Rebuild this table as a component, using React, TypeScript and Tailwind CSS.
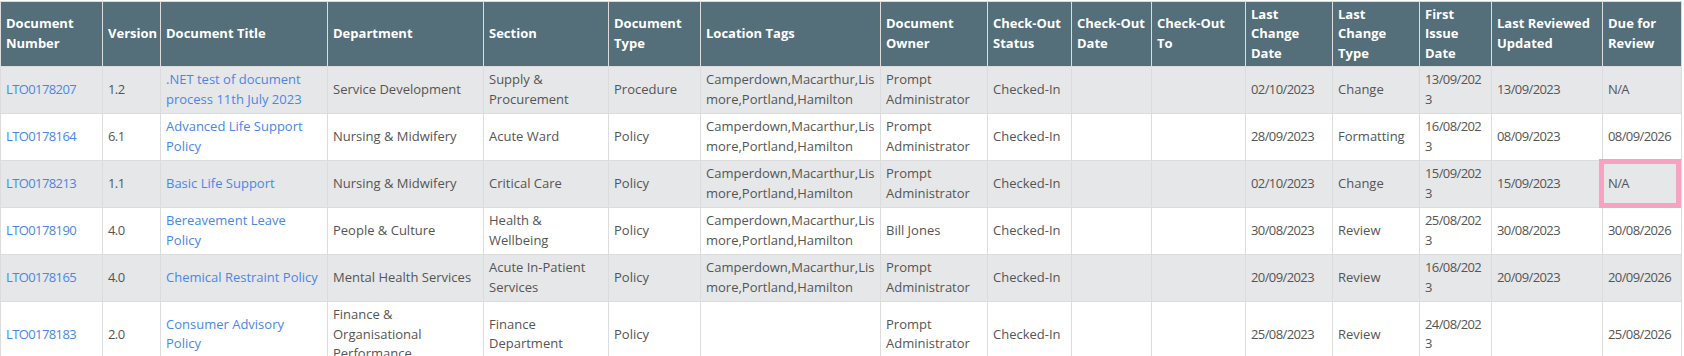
type Column = {
  key: string;
  label: string[];
  width: number;
  kind?: "link" | "date" | "code";
};

type DocRow = Record<string, string> & { highlight?: string };

const COLUMNS: Column[] = [
  { key: "number", label: ["Document", "Number"], width: 102, kind: "code" },
  { key: "version", label: ["Version"], width: 58 },
  { key: "title", label: ["Document Title"], width: 167, kind: "link" },
  { key: "department", label: ["Department"], width: 156 },
  { key: "section", label: ["Section"], width: 125 },
  { key: "type", label: ["Document", "Type"], width: 92 },
  { key: "locations", label: ["Location Tags"], width: 180 },
  { key: "owner", label: ["Document", "Owner"], width: 107 },
  { key: "status", label: ["Check-Out", "Status"], width: 84 },
  { key: "checkoutDate", label: ["Check-Out", "Date"], width: 80 },
  { key: "checkoutTo", label: ["Check-Out", "To"], width: 94 },
  { key: "changeDate", label: ["Last", "Change", "Date"], width: 87, kind: "date" },
  { key: "changeType", label: ["Last", "Change", "Type"], width: 87 },
  { key: "firstIssue", label: ["First", "Issue", "Date"], width: 72, kind: "date" },
  { key: "reviewed", label: ["Last Reviewed", "Updated"], width: 111, kind: "date" },
  { key: "due", label: ["Due for", "Review"], width: 79, kind: "date" }
];

const LOCATIONS = "Camperdown,Macarthur,Lismore,Portland,Hamilton";

const ROWS: DocRow[] = [
  {
    number: "LTO0178207",
    version: "1.2",
    title: ".NET test of document process 11th July 2023",
    department: "Service Development",
    section: "Supply & Procurement",
    type: "Procedure",
    locations: LOCATIONS,
    owner: "Prompt Administrator",
    status: "Checked-In",
    checkoutDate: "",
    checkoutTo: "",
    changeDate: "02/10/2023",
    changeType: "Change",
    firstIssue: "13/09/2023",
    reviewed: "13/09/2023",
    due: "N/A"
  },
  {
    number: "LTO0178164",
    version: "6.1",
    title: "Advanced Life Support Policy",
    department: "Nursing & Midwifery",
    section: "Acute Ward",
    type: "Policy",
    locations: LOCATIONS,
    owner: "Prompt Administrator",
    status: "Checked-In",
    checkoutDate: "",
    checkoutTo: "",
    changeDate: "28/09/2023",
    changeType: "Formatting",
    firstIssue: "16/08/2023",
    reviewed: "08/09/2023",
    due: "08/09/2026"
  },
  {
    number: "LTO0178213",
    version: "1.1",
    title: "Basic Life Support",
    department: "Nursing & Midwifery",
    section: "Critical Care",
    type: "Policy",
    locations: LOCATIONS,
    owner: "Prompt Administrator",
    status: "Checked-In",
    checkoutDate: "",
    checkoutTo: "",
    changeDate: "02/10/2023",
    changeType: "Change",
    firstIssue: "15/09/2023",
    reviewed: "15/09/2023",
    due: "N/A",
    highlight: "due"
  },
  {
    number: "LTO0178190",
    version: "4.0",
    title: "Bereavement Leave Policy",
    department: "People & Culture",
    section: "Health & Wellbeing",
    type: "Policy",
    locations: LOCATIONS,
    owner: "Bill Jones",
    status: "Checked-In",
    checkoutDate: "",
    checkoutTo: "",
    changeDate: "30/08/2023",
    changeType: "Review",
    firstIssue: "25/08/2023",
    reviewed: "30/08/2023",
    due: "30/08/2026"
  },
  {
    number: "LTO0178165",
    version: "4.0",
    title: "Chemical Restraint Policy",
    department: "Mental Health Services",
    section: "Acute In-Patient Services",
    type: "Policy",
    locations: LOCATIONS,
    owner: "Prompt Administrator",
    status: "Checked-In",
    checkoutDate: "",
    checkoutTo: "",
    changeDate: "20/09/2023",
    changeType: "Review",
    firstIssue: "16/08/2023",
    reviewed: "20/09/2023",
    due: "20/09/2026"
  },
  {
    number: "LTO0178183",
    version: "2.0",
    title: "Consumer Advisory Policy",
    department: "Finance & Organisational Performance",
    section: "Finance Department",
    type: "Policy",
    locations: "",
    owner: "Prompt Administrator",
    status: "Checked-In",
    checkoutDate: "",
    checkoutTo: "",
    changeDate: "25/08/2023",
    changeType: "Review",
    firstIssue: "24/08/2023",
    reviewed: "",
    due: "25/08/2026"
  }
];

function Cell({ col, value, highlighted }: { col: Column; value: string; highlighted: boolean }) {
  // dates and codes run a bit tighter so "dd/mm/202" fits before the wrap
  const tight = col.kind === "date" || col.kind === "code" || /^[\d./]+$/.test(value);
  return (
    <td
      className={`relative border border-[#dcdcdc] py-[3.5px] pl-[5px] align-middle [overflow-wrap:anywhere] ${
        col.kind === "link" ? "pr-[8px]" : "pr-[5px]"
      } ${tight ? "tracking-[-0.6px]" : ""}`}
    >
      {col.kind === "link" || col.kind === "code" ? (
        <a className="text-[#4a86e8]" href="#">
          {value}
        </a>
      ) : (
        value
      )}
      {highlighted && (
        <div className="pointer-events-none absolute -top-[2px] -bottom-[1px] -left-[4px] right-0 border-[5px] border-[#f6a2c3]" />
      )}
    </td>
  );
}

export default function App() {
  return (
    <div className="min-h-screen bg-white pt-px font-['Open_Sans',sans-serif] text-[13px] leading-[19.5px] text-[#555]">
      <table className="w-[1681px] table-fixed border-collapse">
        <colgroup>
          {COLUMNS.map((c) => (
            <col key={c.key} style={{ width: c.width }} />
          ))}
        </colgroup>
        <thead>
          <tr className="bg-[#546e7a] text-white">
            {COLUMNS.map((c) => (
              <th
                key={c.key}
                className="border border-[#dcdcdc] py-[2.5px] pl-[5px] pr-[4px] text-left align-middle font-bold"
              >
                {c.label.map((line) => (
                  <span key={line} className="block whitespace-nowrap">
                    {line}
                  </span>
                ))}
              </th>
            ))}
          </tr>
        </thead>
        <tbody>
          {ROWS.map((row, i) => (
            <tr key={row.number} className={i % 2 === 0 ? "bg-[#e6e7e8]" : "bg-white"}>
              {COLUMNS.map((c) => (
                <Cell key={c.key} col={c} value={row[c.key]} highlighted={row.highlight === c.key} />
              ))}
            </tr>
          ))}
        </tbody>
      </table>
    </div>
  );
}
